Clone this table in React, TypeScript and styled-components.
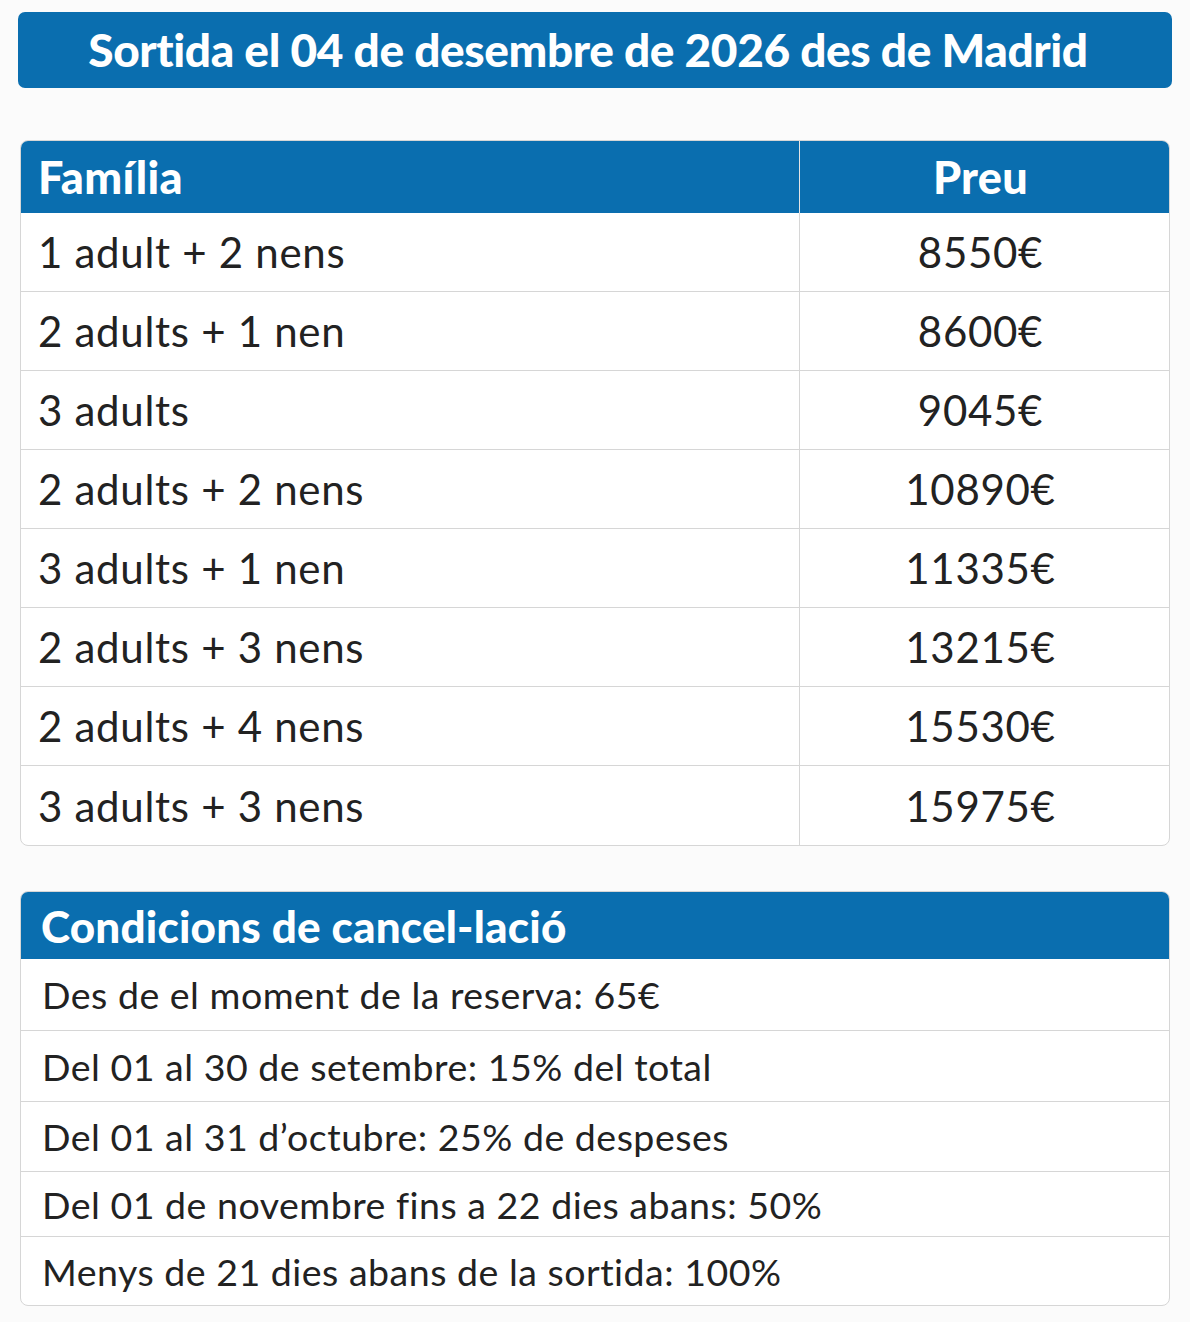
import React from "react";
import styled, { createGlobalStyle } from "styled-components";

const Global = createGlobalStyle`
  html, body { margin: 0; padding: 0; background: #fbfbfb; }
  body { font-family: Lato, "Open Sans", sans-serif; color: #222; }
  * { box-sizing: border-box; }
`;

const BLUE = "#0a6eaf";
const LINE = "#d6d6d6";

const Page = styled.div`
  width: 1190px;
  padding: 12px 18px 16px 18px;
  display: flex;
  flex-direction: column;
`;

const Banner = styled.div`
  height: 76px;
  background: ${BLUE};
  border-radius: 7px;
  display: flex;
  align-items: center;
  justify-content: center;
  color: #fff;
  font-weight: 900;
  font-size: 46px;
  letter-spacing: -0.4px;
  padding-bottom: 2px;
  padding-right: 14px;
  margin-bottom: 52px;
`;

const Card = styled.div<{ $mb?: number }>`
  margin: 0 2px ${(p) => p.$mb ?? 0}px 2px;
  border: 1.5px solid ${LINE};
  border-radius: 8px;
  overflow: hidden;
  background: #fff;
`;

const PriceGrid = styled.div`
  display: grid;
  grid-template-columns: 779px 1fr;
`;

const HeadCell = styled.div<{ $center?: boolean; $divider?: boolean }>`
  height: 72px;
  background: ${BLUE};
  color: #fff;
  font-weight: 900;
  font-size: 45px;
  letter-spacing: 0.3px;
  display: flex;
  align-items: center;
  justify-content: ${(p) => (p.$center ? "center" : "flex-start")};
  padding-left: ${(p) => (p.$center ? 0 : 17)}px;
  padding-right: ${(p) => (p.$center ? 8 : 0)}px;
  border-right: ${(p) => (p.$divider ? `1.5px solid #e4e4e4` : "none")};
`;

const Cell = styled.div<{ $center?: boolean; $divider?: boolean; $last?: boolean }>`
  height: 79px;
  font-size: 42px;
  letter-spacing: 0.7px;
  color: #222;
  display: flex;
  align-items: center;
  justify-content: ${(p) => (p.$center ? "center" : "flex-start")};
  padding-left: ${(p) => (p.$center ? 0 : 17)}px;
  padding-right: ${(p) => (p.$center ? 8 : 0)}px;
  border-right: ${(p) => (p.$divider ? `1.5px solid ${LINE}` : "none")};
  border-bottom: ${(p) => (p.$last ? "none" : `1.5px solid ${LINE}`)};
`;

const CondHead = styled.div`
  height: 67px;
  background: ${BLUE};
  color: #fff;
  font-weight: 900;
  font-size: 44px;
  letter-spacing: 0.2px;
  display: flex;
  align-items: center;
  padding-left: 20px;
`;

const CondRow = styled.div<{ $h: number; $last?: boolean }>`
  height: ${(p) => p.$h}px;
  font-size: 37.5px;
  letter-spacing: 0.5px;
  color: #222;
  display: flex;
  align-items: center;
  padding-left: 21px;
  border-bottom: ${(p) => (p.$last ? "none" : `1.5px solid ${LINE}`)};
`;

const prices: [string, string][] = [
  ["1 adult + 2 nens", "8550€"],
  ["2 adults + 1 nen", "8600€"],
  ["3 adults", "9045€"],
  ["2 adults + 2 nens", "10890€"],
  ["3 adults + 1 nen", "11335€"],
  ["2 adults + 3 nens", "13215€"],
  ["2 adults + 4 nens", "15530€"],
  ["3 adults + 3 nens", "15975€"],
];

const conds: [string, number][] = [
  ["Des de el moment de la reserva: 65€", 72],
  ["Del 01 al 30 de setembre: 15% del total", 71],
  ["Del 01 al 31 d’octubre: 25% de despeses", 70],
  ["Del 01 de novembre fins a 22 dies abans: 50%", 65],
  ["Menys de 21 dies abans de la sortida: 100%", 68],
];

export default function App() {
  return (
    <>
      <Global />
      <Page>
        <Banner>Sortida el 04 de desembre de 2026 des de Madrid</Banner>
        <Card $mb={45}>
          <PriceGrid>
            <HeadCell $divider>Família</HeadCell>
            <HeadCell $center>Preu</HeadCell>
            {prices.map(([f, p], i) => (
              <React.Fragment key={f}>
                <Cell $divider $last={i === prices.length - 1}>{f}</Cell>
                <Cell $center $last={i === prices.length - 1}>{p}</Cell>
              </React.Fragment>
            ))}
          </PriceGrid>
        </Card>
        <Card>
          <CondHead>Condicions de cancel-lació</CondHead>
          {conds.map(([t, h], i) => (
            <CondRow key={t} $h={h} $last={i === conds.length - 1}>{t}</CondRow>
          ))}
        </Card>
      </Page>
    </>
  );
}
